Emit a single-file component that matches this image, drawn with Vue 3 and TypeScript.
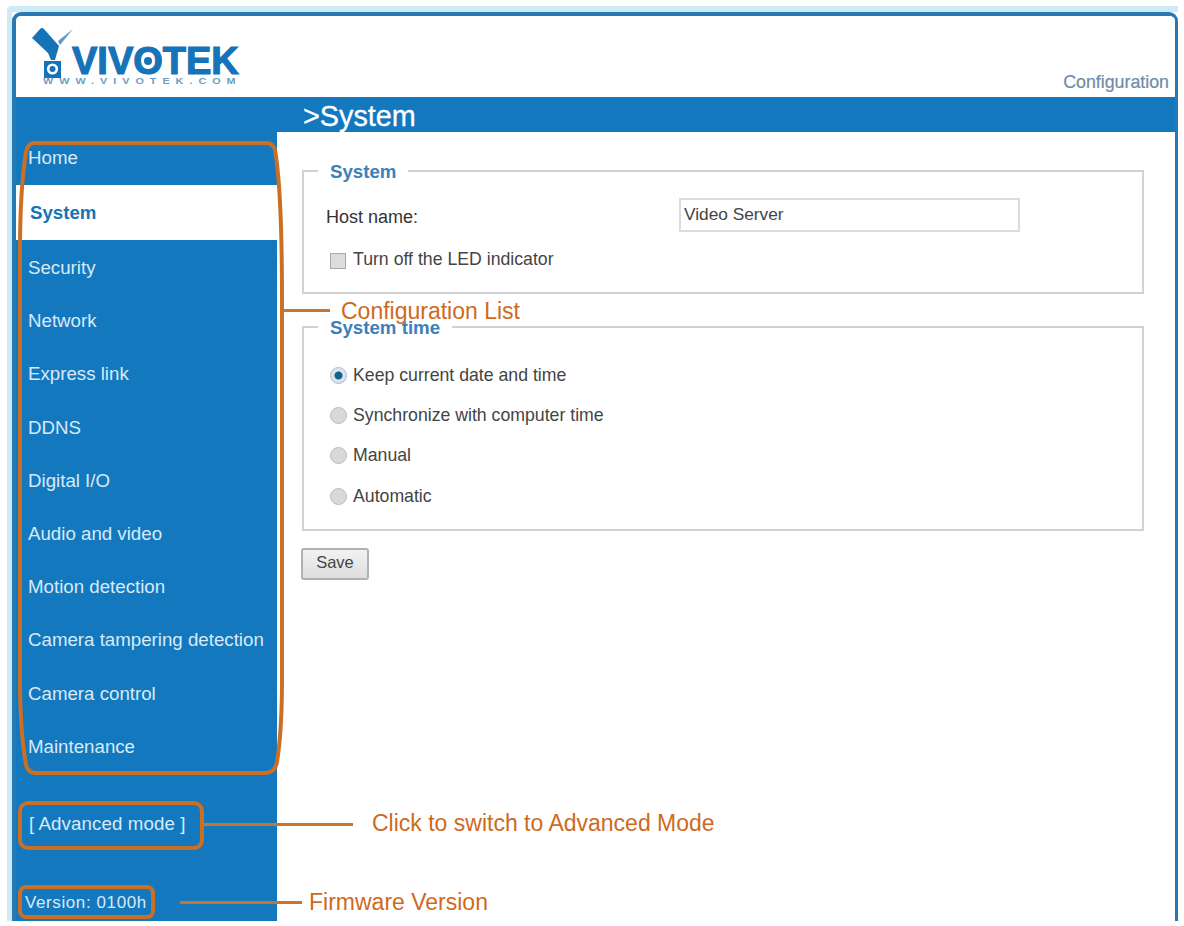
<script setup lang="ts">
const menu: string[] = ['Home','System','Security','Network','Express link','DDNS','Digital I/O','Audio and video','Motion detection','Camera tampering detection','Camera control','Maintenance']
const radios: string[] = ['Keep current date and time','Synchronize with computer time','Manual','Automatic']
</script>

<template>
  <div class="page">
    <div class="frame">
      <div class="panel">
        <header class="head">
          <div class="logo">
            <svg class="mark" width="46" height="54" viewBox="30 26 46 54">
              <path d="M32 38 L40 29 Q42 27 44 29 L59 46 L55 60 L51 60 L48 53 Z" fill="#1673b8"/>
              <path d="M58 41 L73 29 L60 45 Z" fill="#5f9cc8"/>
              <rect x="44" y="61" width="17" height="17" fill="#1673b8"/>
              <circle cx="52.5" cy="69" r="5.6" fill="#fff"/>
              <circle cx="52.5" cy="69" r="3" fill="#1673b8"/>
            </svg>
            <div class="logo-words">
              <div class="brand">VIV<span class="brand-o">O</span>TEK</div>
              <div class="url">WWW.VIVOTEK.COM</div>
            </div>
          </div>
          <div class="conf">Configuration</div>
        </header>
        <div class="bar"><span class="bar-title">&gt;System</span></div>
        <div class="body">
          <aside class="side">
            <ul class="menu">
              <li v-for="m in menu" :key="m" :class="{ on: m === 'System' }">{{ m }}</li>
            </ul>
            <div class="adv">[ Advanced mode ]</div>
            <div class="ver">Version: 0100h</div>
          </aside>
          <main class="main">
            <fieldset class="fs fs1">
              <legend>System</legend>
              <div class="host">
                <label>Host name:</label>
                <div class="input">Video Server</div>
              </div>
              <div class="check"><span class="box"></span><span>Turn off the LED indicator</span></div>
            </fieldset>
            <fieldset class="fs fs2">
              <legend>System time</legend>
              <div v-for="(r, i) in radios" :key="r" class="radio">
                <span class="dot" :class="{ sel: i === 0 }"></span><span>{{ r }}</span>
              </div>
            </fieldset>
            <button class="save" type="button">Save</button>
          </main>
        </div>
      </div>
    </div>

    <svg class="ring-list" width="1184" height="926" viewBox="0 0 1184 926">
      <path d="M34 143 L266 143 Q273 143 275 150 Q282 190 282 300 L282 680 Q282 730 277 762 Q275 773 265 773 L36 773 Q28 773 26 765 Q20 730 20 680 L20 250 Q20 190 26 152 Q28 143 34 143 Z" fill="none" stroke="#cb6f24" stroke-width="4"/>
    </svg>
    <div class="ring ring-adv"></div>
    <div class="ring ring-ver"></div>
    <div class="line l1"></div>
    <div class="line l2"></div>
    <div class="line l3"></div>
    <div class="note n1">Configuration List</div>
    <div class="note n2">Click to switch to Advanced Mode</div>
    <div class="note n3">Firmware Version</div>
  </div>
</template>

<style>
html, body { margin: 0; background: #fff; }
</style>

<style scoped>
.page {
  position: relative;
  width: 1184px;
  height: 926px;
  overflow: hidden;
  background: #fff;
  font-family: "Liberation Sans", Arial, sans-serif;
  padding: 6px 0 0 7px;
  box-sizing: border-box;
}
.frame {
  box-sizing: border-box;
  width: 1171px;
  height: 915px;
  border-top: 6px solid #cdeaf7;
  border-left: 5px solid #cdeaf7;
  border-radius: 5px 0 0 0;
}
.panel {
  box-sizing: border-box;
  height: 100%;
  display: flex;
  flex-direction: column;
  border: 4px solid #2a78b2;
  border-right-width: 3px;
  border-bottom: 0;
  border-radius: 9px 9px 0 0;
  overflow: hidden;
}
.head {
  height: 81px;
  flex: none;
  display: flex;
  justify-content: space-between;
  background: #fff;
}
.logo { display: flex; padding: 10px 0 0 14px; }
.logo-words { margin: 20px 0 0 -4px; width: 170px; }
.brand {
  font-size: 38px;
  font-weight: 700;
  line-height: 30px;
  color: #1673b8;
  -webkit-text-stroke: 1.2px #1673b8;
  white-space: nowrap;
}
.brand-o { position: relative; }
.brand-o::after {
  content: "";
  position: absolute;
  left: 50%;
  top: 50%;
  width: 8px;
  height: 8px;
  margin: -4px 0 0 -4px;
  border-radius: 50%;
  background: #1673b8;
}
.url {
  font-size: 9px;
  line-height: 10px;
  color: #6c9ec4;
  margin-left: -29px;
  letter-spacing: 5px;
  white-space: nowrap;
  transform: scaleX(1.2);
  transform-origin: left;
  font-weight: 700;
}
.conf {
  align-self: flex-end;
  font-size: 17.8px;
  line-height: 20px;
  margin-bottom: 5px;
  margin-right: 6px;
  color: #6f8ba6;
  -webkit-text-stroke: 0.2px #6f8ba6;
}
.bar {
  height: 35px;
  flex: none;
  background: #1478bf;
  padding-left: 287px;
  box-sizing: border-box;
}
.bar-title {
  color: #fff;
  font-size: 28.8px;
  line-height: 38px;
  display: block;
  -webkit-text-stroke: 0.3px #fff;
}
.body { flex: 1; display: flex; min-height: 0; }
.side {
  width: 261px;
  flex: none;
  background: #1478bf;
  font-size: 18.7px;
}
.menu { list-style: none; margin: 0; padding: 0; display: flex; flex-direction: column; }
.menu li {
  height: 53.2px;
  line-height: 55px;
  padding-left: 12px;
  white-space: nowrap;
  color: #d8eaf7;
}
.menu li:first-child { height: 53px; line-height: 52px; }
.menu li.on {
  height: 55px;
  background: #fff;
  color: #1673b8;
  font-weight: 700;
  line-height: 56px;
  padding-left: 14px;
}
.adv { margin: 39px 0 0 13px; line-height: 26px; color: #d8eaf7; letter-spacing: 0.1px; white-space: nowrap; }
.ver { margin: 54px 0 0 9px; line-height: 24px; font-size: 17px; letter-spacing: 0.6px; color: #d8eaf7; white-space: nowrap; }
.main { flex: 1; padding: 27px 0 0 24px; background: #fff; }
.fs {
  margin: 0 0 0 1px;
  width: 842px;
  box-sizing: border-box;
  border: 2px solid #d2d2d2;
  padding: 0;
  min-width: 0;
  color: #444;
  font-size: 17.7px;
}
.fs legend {
  margin-left: 14px;
  padding: 2px 12px 0;
  color: #3d7fb8;
  font-size: 18.7px;
  font-weight: 700;
  line-height: 22px;
}
.fs1 { height: 135px; }
.fs2 { height: 216px; margin-top: 21px; }
.host { display: flex; align-items: center; padding: 15px 0 0 22px; font-size: 18px; color: #333; }
.host label { width: 353px; margin-top: 5px; }
.input {
  box-sizing: border-box;
  width: 341px;
  height: 34px;
  border: 2px solid #dcdcdc;
  line-height: 29px;
  padding-left: 3px;
  color: #444;
  font-size: 17.3px;
}
.check { display: flex; align-items: center; gap: 7px; padding: 17px 0 0 26px; }
.box {
  width: 16px; height: 16px; box-sizing: border-box;
  border: 1px solid #a9a9a9;
  background: #dcdcdc;
  margin-top: 3px;
}
.radio { display: flex; align-items: center; gap: 6px; height: 40.4px; padding-left: 26px; }
.radio:first-of-type { margin-top: 16px; }
.dot {
  width: 17px; height: 17px; box-sizing: border-box; flex: none;
  border-radius: 50%;
  border: 1px solid #bdbdbd;
  background: #d9d9d9;
}
.dot.sel {
  background: radial-gradient(circle, #14618f 0 3.5px, #dde3ea 4.5px);
  border-color: #a9bccd;
}
.save {
  display: block;
  margin-top: 17px;
  width: 68px;
  height: 32px;
  border: 2px solid #b1b1b1;
  border-radius: 3px;
  background: linear-gradient(#f2f2f2, #dedede);
  font-family: inherit;
  font-size: 16.5px;
  color: #444;
  padding: 0 0 3px;
}
.ring-list { position: absolute; left: 0; top: 0; pointer-events: none; }
.ring { position: absolute; border: 4px solid #cb6f24; box-sizing: border-box; }
.ring-adv { left: 18px; top: 801px; width: 186px; height: 49px; border-radius: 10px; }
.ring-ver { left: 18px; top: 885px; width: 137px; height: 34px; border-radius: 8px; }
.line { position: absolute; height: 3px; background: #c9752e; }
.l1 { left: 283px; top: 309px; width: 47px; }
.l2 { left: 204px; top: 823px; width: 149px; }
.l3 { left: 180px; top: 901px; width: 122px; }
.note { position: absolute; color: #cf6a1c; font-size: 23px; line-height: 26px; white-space: nowrap; }
.n1 { left: 341px; top: 298px; }
.n2 { left: 372px; top: 810px; }
.n3 { left: 309px; top: 889px; }
</style>
